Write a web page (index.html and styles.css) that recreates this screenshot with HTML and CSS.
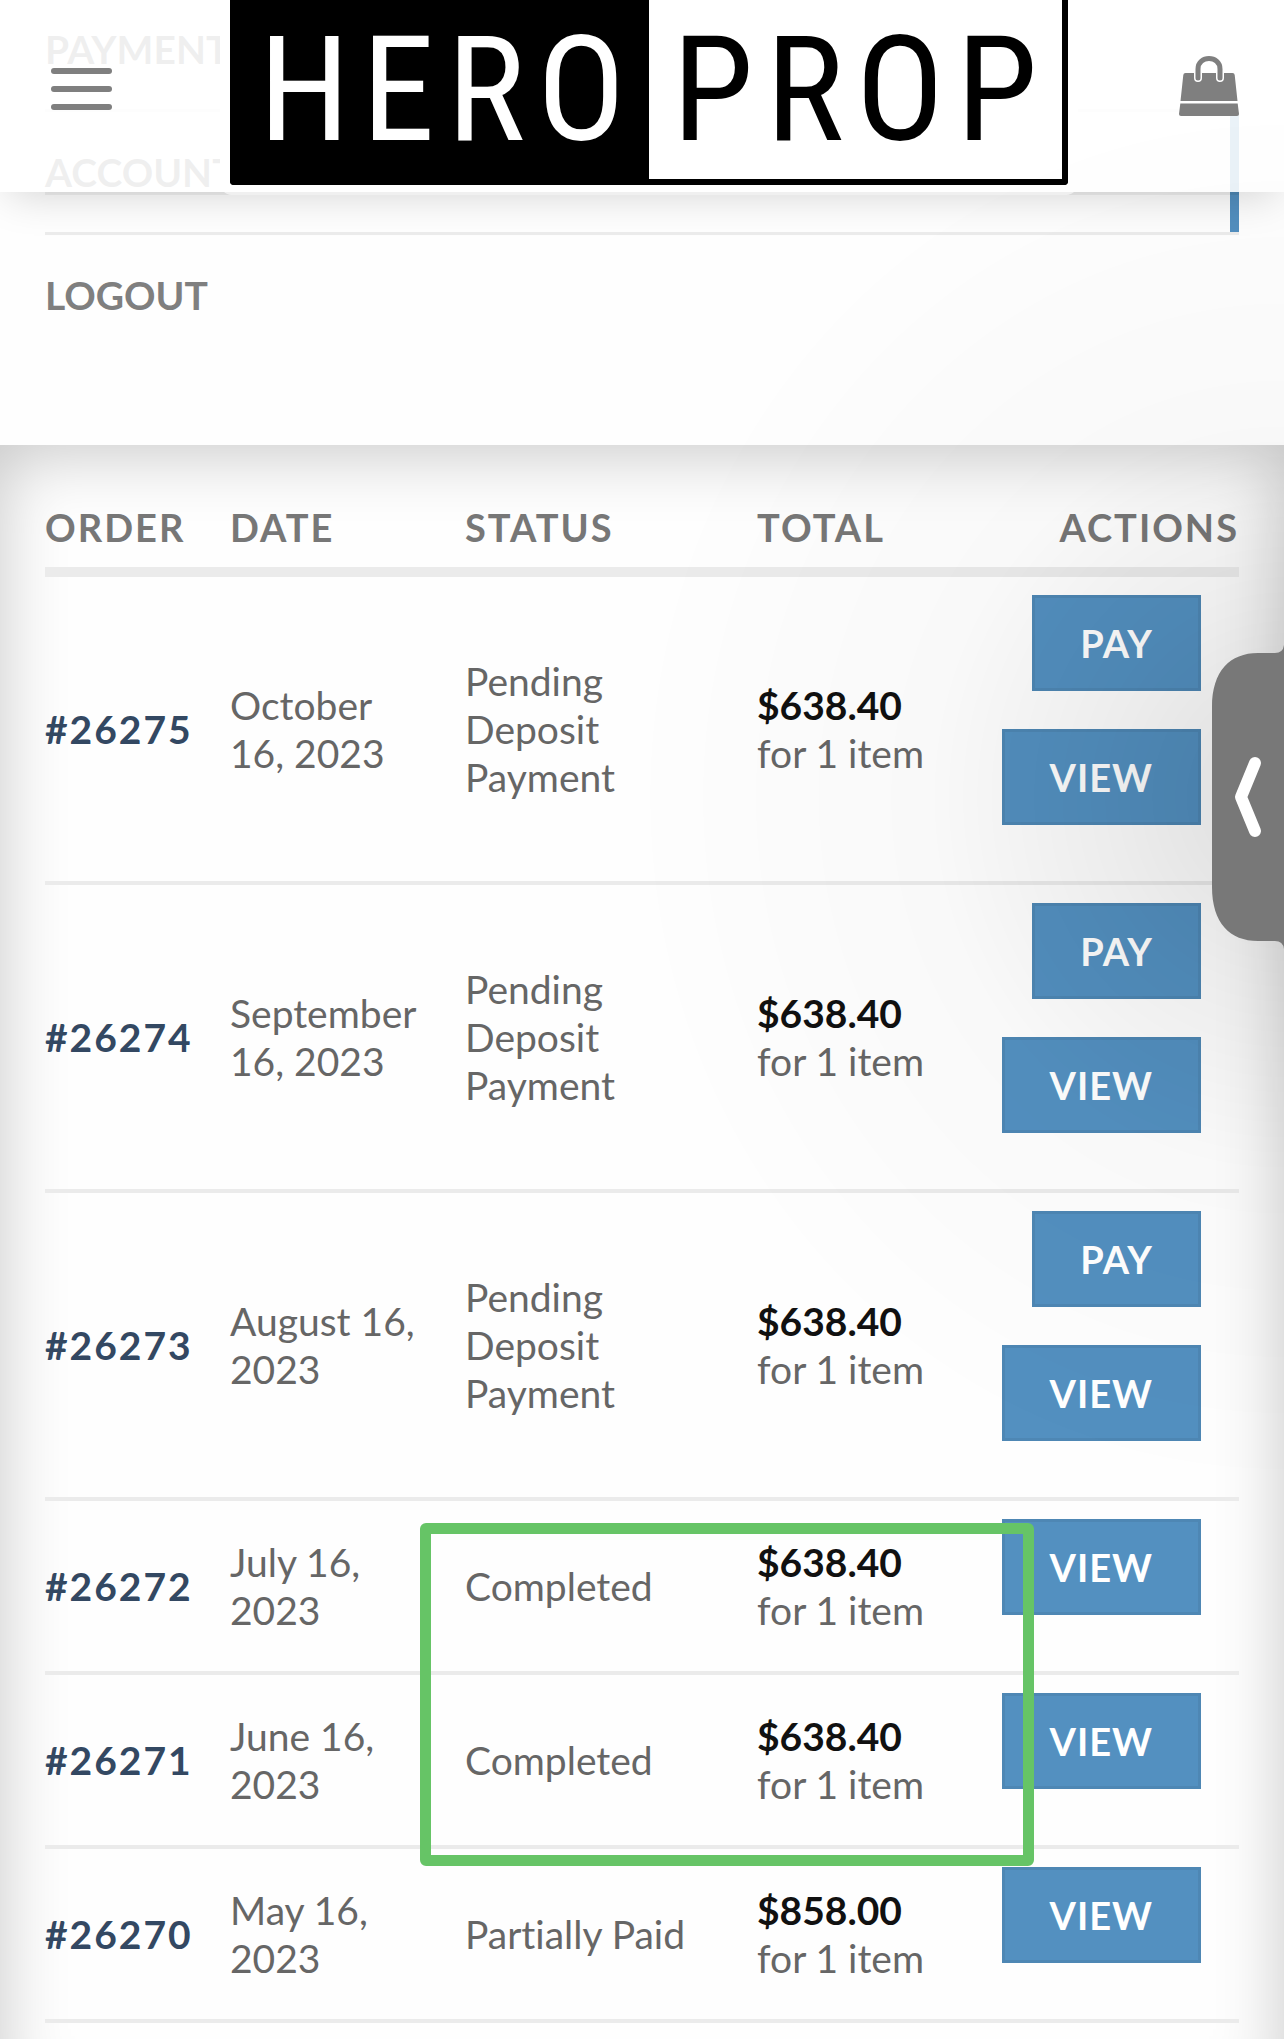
FILE: index.html
```html
<!DOCTYPE html>
<html lang="en">
<head>
  <meta charset="UTF-8">
  <meta name="viewport" content="width=device-width, initial-scale=1.0">
  <title>Orders - Hero Prop</title>
  <link rel="stylesheet" href="styles.css">
</head>
<body>
  <header class="header">
    <button class="menu-toggle" type="button" aria-label="Menu">
      <span></span>
      <span></span>
      <span></span>
    </button>
    <a href="#" class="logo">
      <span class="logo-hero">HERO</span>
      <span class="logo-prop">PROP</span>
    </a>
    <a href="#" class="cart" aria-label="Cart">
      <svg viewBox="0 0 60 60" width="60" height="60">
        <path fill="#7f7f7f" d="M6.500 17H53.500Q55.500 17 55.700 19L58.500 45H1.500L4.300 19Q4.500 17 6.500 17Z"/>
        <path fill="#7f7f7f" d="M1.300 47.500H58.700L60 58Q60 60 58 60H2Q0 60 0 58Z"/>
        <path fill="none" stroke="#fff" stroke-width="8" stroke-linecap="round" d="M19 17V22M41 17V22"/>
        <path fill="none" stroke="#7f7f7f" stroke-width="5" stroke-linecap="round" d="M19 22V13C19 -1 41 -1 41 13V22"/>
      </svg>
    </a>
  </header>

  <nav class="account-nav">
    <ul>
      <li><a href="#">Payment</a></li>
      <li class="active"><a href="#">Account</a></li>
      <li><a href="#">Logout</a></li>
    </ul>
  </nav>

  <main class="orders">
    <table class="orders-table">
      <thead>
        <tr>
          <th class="col-order">Order</th>
          <th class="col-date">Date</th>
          <th class="col-status">Status</th>
          <th class="col-total">Total</th>
          <th class="col-actions">Actions</th>
        </tr>
      </thead>
      <tbody>
        <tr>
          <td><a href="#" class="order-link">#26275</a></td>
          <td>October 16, 2023</td>
          <td>Pending Deposit Payment</td>
          <td><strong>$638.40</strong> for 1 item</td>
          <td>
            <div class="actions">
              <a href="#" class="button">Pay</a>
              <a href="#" class="button">View</a>
            </div>
          </td>
        </tr>
        <tr>
          <td><a href="#" class="order-link">#26274</a></td>
          <td>September 16, 2023</td>
          <td>Pending Deposit Payment</td>
          <td><strong>$638.40</strong> for 1 item</td>
          <td>
            <div class="actions">
              <a href="#" class="button">Pay</a>
              <a href="#" class="button">View</a>
            </div>
          </td>
        </tr>
        <tr>
          <td><a href="#" class="order-link">#26273</a></td>
          <td>August 16, 2023</td>
          <td>Pending Deposit Payment</td>
          <td><strong>$638.40</strong> for 1 item</td>
          <td>
            <div class="actions">
              <a href="#" class="button">Pay</a>
              <a href="#" class="button">View</a>
            </div>
          </td>
        </tr>
        <tr>
          <td><a href="#" class="order-link">#26272</a></td>
          <td>July 16, 2023</td>
          <td>Completed</td>
          <td><strong>$638.40</strong> for 1 item</td>
          <td>
            <div class="actions">
              <a href="#" class="button">View</a>
            </div>
          </td>
        </tr>
        <tr>
          <td><a href="#" class="order-link">#26271</a></td>
          <td>June 16, 2023</td>
          <td>Completed</td>
          <td><strong>$638.40</strong> for 1 item</td>
          <td>
            <div class="actions">
              <a href="#" class="button">View</a>
            </div>
          </td>
        </tr>
        <tr>
          <td><a href="#" class="order-link">#26270</a></td>
          <td>May 16, 2023</td>
          <td>Partially Paid</td>
          <td><strong>$858.00</strong> for 1 item</td>
          <td>
            <div class="actions">
              <a href="#" class="button">View</a>
            </div>
          </td>
        </tr>
      </tbody>
    </table>
    <div class="highlight"></div>
  </main>

  <div class="side-shade"></div>
  <button class="side-tab" type="button" aria-label="Open panel">
    <svg viewBox="0 0 72 304" width="72" height="304">
      <path fill="#787878" d="M72 0Q71 8 63 8H46C18 8 0 26 0 62V242C0 278 18 296 46 296H63Q71 296 72 304Z"/>
      <path fill="none" stroke="#fff" stroke-width="12" stroke-linecap="round" stroke-linejoin="round" d="M43 118L29 152L43 186"/>
    </svg>
  </button>
</body>
</html>
```

FILE: styles.css
```css
* {
  box-sizing: border-box;
}
body {
  margin: 0;
  font-family: Lato, sans-serif;
  font-size: 39px;
  font-variant-ligatures: none;
  line-height: 48px;
  color: #666;
  background: #fefefe;
  overflow-x: hidden;
}
a {
  text-decoration: none;
}

/* header */
.header {
  position: fixed;
  top: 0;
  left: 0;
  right: 0;
  z-index: 3;
  height: 192px;
  padding: 0 45px 7px;
  display: flex;
  justify-content: space-between;
  align-items: center;
  background: rgba(255, 255, 255, 0.88);
  box-shadow: 0 10px 40px -8px rgba(0, 0, 0, 0.18);
}
.header::after {
  content: "";
  position: absolute;
  top: 100%;
  left: 45px;
  right: 45px;
  height: 3px;
  background: rgba(0, 0, 0, 0.06);
}
.menu-toggle {
  display: flex;
  flex-direction: column;
  gap: 12px;
  width: 73px;
  padding: 6px 6px 14px;
  border: 0;
  background: none;
}
.menu-toggle span {
  height: 6px;
  border-radius: 3px;
  background: #7f7f7f;
}
.logo {
  display: flex;
  align-self: stretch;
  width: 838px;
  box-shadow: 0 0 0 10px #fff;
  border: 6px solid #000;
  border-top: 0;
  border-radius: 0 0 4px 4px;
  background: #fff;
  font-family: "Liberation Sans Narrow", "Roboto Condensed", "Open Sans Condensed", Roboto, sans-serif;
  font-size: 147px;
  font-weight: 400;
  line-height: 180px;
  letter-spacing: 12px;
}
.logo span {
  flex: 1;
  padding-left: 12px;
  text-align: center;
}
.logo-hero {
  color: #fff;
  background: #000;
}
.logo-prop {
  color: #000;
}
.cart {
  display: flex;
  padding-bottom: 14px;
}

/* account menu */
.account-nav {
  height: 456px;
  margin-top: -11px;
  padding: 0 45px;
}
.account-nav ul {
  margin: 0;
  padding: 0;
  list-style: none;
}
.account-nav li {
  border-bottom: 3px solid #ececec;
}
.account-nav li:last-child {
  border-bottom: 0;
}
.account-nav a {
  display: block;
  padding: 36px 0;
  color: #7f7f7f;
  font-weight: 700;
  text-transform: uppercase;
}
.account-nav .active a {
  border-right: 9px solid #5390c0;
}

/* orders */
.orders {
  position: relative;
  padding: 50px 45px 80px;
  background: #fefefe;
  box-shadow: inset 0 8px 68px rgba(0, 0, 0, 0.22);
}
.orders-table {
  width: 100%;
  table-layout: fixed;
  border-collapse: separate;
  border-spacing: 0;
}
.orders-table th {
  padding: 8px 0 16px;
  border-bottom: 10px solid #ebebeb;
  color: #777;
  font-size: 38px;
  font-weight: 700;
  letter-spacing: 2px;
  text-align: left;
  text-transform: uppercase;
}
.orders-table td {
  padding: 18px 40px 18px 0;
  border-bottom: 4px solid #ebebeb;
  vertical-align: middle;
}
.orders-table td:first-child,
.orders-table td:last-child {
  padding-right: 0;
}
.orders-table .col-order {
  width: 185px;
}
.orders-table .col-date {
  width: 235px;
}
.orders-table .col-status {
  width: 292px;
}
.orders-table .col-total {
  width: 220px;
}
.orders-table .col-actions {
  text-align: right;
}
.orders-table strong {
  display: block;
  color: #111;
}
.order-link {
  color: #334862;
  font-weight: 700;
  letter-spacing: 2px;
}
.actions {
  display: flex;
  flex-direction: column;
  align-items: flex-end;
  padding-right: 38px;
}
.button {
  margin-bottom: 38px;
  padding: 21px 45px;
  border: 3px solid rgba(0, 0, 0, 0.06);
  background: #5390c0;
  color: #fff;
  font-size: 38px;
  font-weight: 700;
  letter-spacing: 1px;
  text-transform: uppercase;
}
.highlight {
  position: absolute;
  top: 1078px;
  left: 420px;
  width: 614px;
  height: 343px;
  border: 11px solid #66c466;
  border-radius: 6px;
}

/* side panel handle */
.side-shade {
  position: fixed;
  top: 0;
  right: 0;
  z-index: 4;
  width: 700px;
  height: 1600px;
  background: radial-gradient(ellipse 660px 700px at 100% 797px, rgba(0, 0, 0, 0.13), rgba(0, 0, 0, 0.07) 26%, rgba(0, 0, 0, 0.02) 54%, rgba(0, 0, 0, 0.01) 76%, transparent);
  pointer-events: none;
}
.side-tab {
  position: fixed;
  top: 645px;
  right: 0;
  z-index: 5;
  display: flex;
  padding: 0;
  border: 0;
  background: none;
}
```
